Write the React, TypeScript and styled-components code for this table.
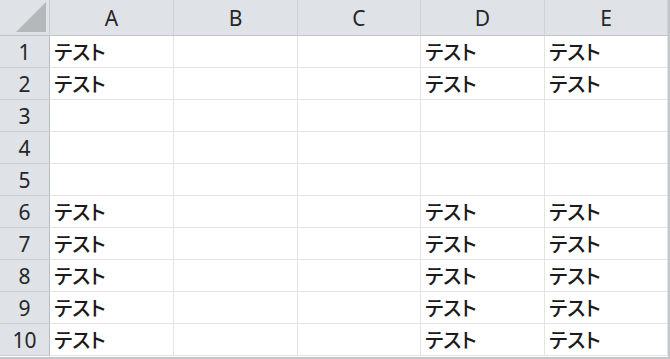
import React from "react";
import styled, { createGlobalStyle } from "styled-components";

const GlobalStyle = createGlobalStyle`
  html, body {
    margin: 0;
    padding: 0;
    background: #ffffff;
  }
  body {
    width: 670px;
    height: 359px;
    overflow: hidden;
  }
`;

const columns = ["A", "B", "C", "D", "E"];
const widths = [124, 124, 123, 124, 123];

const filled = [1, 2, 6, 7, 8, 9, 10];
const text = "テスト";

function App() {
  const rows = Array.from({ length: 10 }, (_, i) => i + 1);
  return (
    <>
      <GlobalStyle />
      <Sheet>
        <HeaderRow>
          <Corner>
            <Triangle />
          </Corner>
          {columns.map((c, i) => (
            <ColHead key={c} $w={widths[i]}>
              {c}
            </ColHead>
          ))}
        </HeaderRow>
        {rows.map((r) => (
          <Row key={r}>
            <RowHead>{r}</RowHead>
            {columns.map((c, i) => (
              <Cell key={c} $w={widths[i]}>
                {filled.includes(r) && (c === "A" || c === "D" || c === "E")
                  ? text
                  : ""}
              </Cell>
            ))}
          </Row>
        ))}
      </Sheet>
    </>
  );
}

const Sheet = styled.div`
  width: 668px;
  height: 357px;
  border-right: 2px solid #c4c7ca;
  border-bottom: 2px solid #c4c7ca;
  background: #ffffff;
  display: flex;
  flex-direction: column;
`;

const HeaderRow = styled.div`
  display: flex;
  height: 36px;
  background: #dfe3e8;
  border-bottom: 1px solid #c3c6c9;
  box-sizing: border-box;
`;

const Corner = styled.div`
  position: relative;
  width: 50px;
  flex: none;
  border-right: 1px solid #c9ccd0;
  box-sizing: border-box;
`;

const Triangle = styled.div`
  position: absolute;
  right: 3px;
  bottom: 3px;
  width: 0;
  height: 0;
  border-left: 30px solid transparent;
  border-bottom: 30px solid #b5b8bb;
`;

const ColHead = styled.div<{ $w: number }>`
  width: ${(p) => p.$w}px;
  flex: none;
  box-sizing: border-box;
  border-right: 1px solid #cfd2d6;
  display: flex;
  align-items: center;
  justify-content: center;
  font-family: "Noto Sans", "Liberation Sans", sans-serif;
  font-size: 21px;
  color: #262626;
  padding-top: 1px;
`;

const Row = styled.div`
  display: flex;
  height: 32px;
`;

const RowHead = styled.div`
  width: 50px;
  flex: none;
  box-sizing: border-box;
  background: #dfe3e8;
  border-right: 1px solid #b9bcc0;
  border-bottom: 1px solid #c9ccd0;
  display: flex;
  align-items: center;
  justify-content: center;
  font-family: "Noto Sans", "Liberation Sans", sans-serif;
  font-size: 21px;
  color: #262626;
`;

const Cell = styled.div<{ $w: number }>`
  width: ${(p) => p.$w}px;
  flex: none;
  box-sizing: border-box;
  border-right: 1px solid #e1e3e5;
  border-bottom: 1px solid #e1e3e5;
  display: flex;
  align-items: center;
  padding-left: 4px;
  font-family: "Noto Sans CJK JP", sans-serif;
  font-feature-settings: "palt";
  font-size: 20px;
  font-weight: 500;
  color: #1a1a1a;
`;

export default App;
